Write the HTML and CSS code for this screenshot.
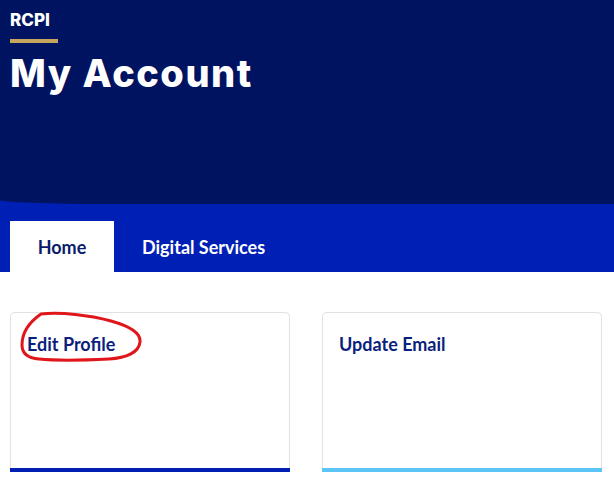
FILE: index.html
```html
<!DOCTYPE html>
<html lang="en">
<head>
<meta charset="utf-8">
<title>My Account</title>
<link rel="stylesheet" href="styles.css">
</head>
<body>
<div class="masthead">
  <header class="hero">
    <div class="brand">RCPI</div>
    <div class="brand-rule"></div>
    <h1 class="title">My Account</h1>
  </header>
  <nav class="tabs">
    <a class="tab tab-active" href="#">Home</a>
    <a class="tab" href="#">Digital Services</a>
  </nav>
</div>
<main class="cards">
  <section class="card card-dark">
    <h2 class="card-title">Edit Profile</h2>
    <svg class="scribble" width="124" height="56" viewBox="0 0 124 56" aria-hidden="true">
      <path d="M22 3 C42 1 70 4 92 10 C110 15 122 22 121 31 C120 41 108 47 90 48 C70 49 40 50 20 48 C8 47 3 42 3 34 C3 22 9 12 22 3" fill="none" stroke="#e0161b" stroke-width="3" stroke-linecap="round"/>
    </svg>
  </section>
  <section class="card card-light">
    <h2 class="card-title">Update Email</h2>
  </section>
</main>
</body>
</html>
```
FILE: styles.css
```css
html, body {
  margin: 0;
  padding: 0;
  background: #ffffff;
}
body {
  width: 614px;
  height: 486px;
  overflow: hidden;
  font-family: "Lato", "Liberation Sans", sans-serif;
}
.masthead {
  background: #001fb5;
}
.hero {
  background: #001361;
  height: 204px;
  box-sizing: border-box;
  padding: 10px 10px 0;
  border-bottom-left-radius: 110px 4px;
}
.brand {
  font-family: "Inter", "Liberation Sans", sans-serif;
  font-weight: 800;
  font-size: 17px;
  line-height: 20px;
  color: #ffffff;
}
.brand-rule {
  width: 48px;
  height: 4px;
  background: #c4a65f;
  margin-top: 9px;
}
.title {
  margin: 8px 0 0;
  font-family: "Inter", "Liberation Sans", sans-serif;
  font-weight: 800;
  font-size: 38px;
  line-height: 44px;
  letter-spacing: 1.5px;
  color: #ffffff;
}
.tabs {
  height: 68px;
  padding: 17px 10px 0;
  box-sizing: border-box;
  display: flex;
  align-items: flex-end;
}
.tab {
  display: flex;
  align-items: center;
  justify-content: center;
  height: 51px;
  padding: 0 28px;
  font-size: 18px;
  font-weight: 700;
  color: #ffffff;
  text-decoration: none;
}
.tab-active {
  background: #ffffff;
  color: #0c1c6b;
  width: 104px;
  padding: 0;
  box-sizing: border-box;
}
.cards {
  display: grid;
  grid-template-columns: 280px 280px;
  gap: 32px;
  padding: 40px 10px 0;
}
.card {
  position: relative;
  height: 160px;
  box-sizing: border-box;
  border: 1px solid #e2e2e2;
  border-bottom: none;
  border-radius: 5px 5px 0 0;
  padding: 20px 16px 0;
}
.card::after {
  content: "";
  position: absolute;
  left: -1px;
  right: -1px;
  bottom: 0;
  height: 4px;
}
.card-dark::after { background: #0020b3; }
.card-light::after { background: #5cc5f7; }
.card-title {
  margin: 0;
  font-size: 18px;
  line-height: 22px;
  font-weight: 700;
  color: #0b1f7c;
}
.scribble {
  position: absolute;
  left: 8px;
  top: -2px;
}
```
